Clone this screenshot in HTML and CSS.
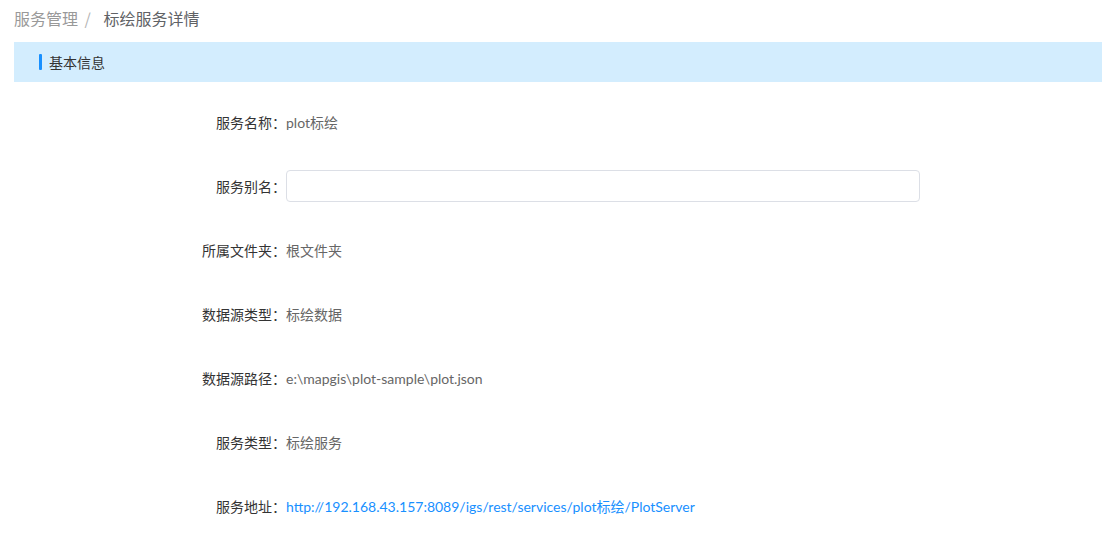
FILE: index.html
```html
<!DOCTYPE html>
<html lang="zh-CN">
<head>
<meta charset="UTF-8">
<meta name="viewport" content="width=device-width, initial-scale=1.0">
<title>标绘服务详情</title>
<link rel="stylesheet" href="styles.css">
</head>
<body>
<div class="page">
    <div class="breadcrumb">
        <span class="crumb">服务管理</span>
        <span class="sep">/</span>
        <span class="crumb current">标绘服务详情</span>
    </div>
    <div class="section-title">
        <span class="mark"></span>
        <span>基本信息</span>
    </div>
    <div class="form">
        <div class="row">
            <label class="label">服务名称：</label>
            <span class="value">plot标绘</span>
        </div>
        <div class="row">
            <label class="label" for="alias">服务别名：</label>
            <input type="text" id="alias" class="input">
        </div>
        <div class="row">
            <label class="label">所属文件夹：</label>
            <span class="value">根文件夹</span>
        </div>
        <div class="row">
            <label class="label">数据源类型：</label>
            <span class="value">标绘数据</span>
        </div>
        <div class="row">
            <label class="label">数据源路径：</label>
            <span class="value">e:\mapgis\plot-sample\plot.json</span>
        </div>
        <div class="row">
            <label class="label">服务类型：</label>
            <span class="value">标绘服务</span>
        </div>
        <div class="row">
            <label class="label">服务地址：</label>
            <a class="value link" href="#">http://192.168.43.157:8089/igs/rest/services/plot标绘/PlotServer</a>
        </div>
    </div>
</div>
</body>
</html>
```

FILE: styles.css
```css
body {
    margin: 0;
    padding: 0;
    background-color: #fff;
    font-family: "Noto Sans CJK SC", "Noto Sans", sans-serif;
    color: #333;
}
.page {
    padding: 0 17px 0 14px;
}
.breadcrumb {
    height: 42px;
    line-height: 36px;
    font-size: 16px;
}
.crumb {
    color: #999;
}
.crumb.current {
    color: #606266;
}
.sep {
    color: #b4b4b4;
    margin: 0 9px 0 3px;
}
.section-title {
    display: flex;
    align-items: center;
    height: 40px;
    padding-left: 25px;
    background-color: #d3edfe;
    font-size: 14px;
    color: #333;
}
.mark {
    width: 3px;
    height: 16px;
    background-color: #1890ff;
    border-radius: 1px;
    margin-right: 7px;
}
.form {
    margin-top: 24px;
    display: flex;
    flex-direction: column;
    gap: 32px;
}
.row {
    display: flex;
    align-items: center;
    height: 32px;
    font-size: 14px;
}
.label {
    width: 272px;
    text-align: right;
    color: #333;
    flex-shrink: 0;
}
.value {
    color: #666;
    font-family: Lato, "Noto Sans CJK SC", sans-serif;
}
.link {
    color: #1890ff;
    text-decoration: none;
}
.input {
    width: 634px;
    height: 32px;
    box-sizing: border-box;
    border: 1px solid #dcdfe6;
    border-radius: 4px;
    padding: 0 10px;
    font-size: 14px;
    outline: none;
}
```
